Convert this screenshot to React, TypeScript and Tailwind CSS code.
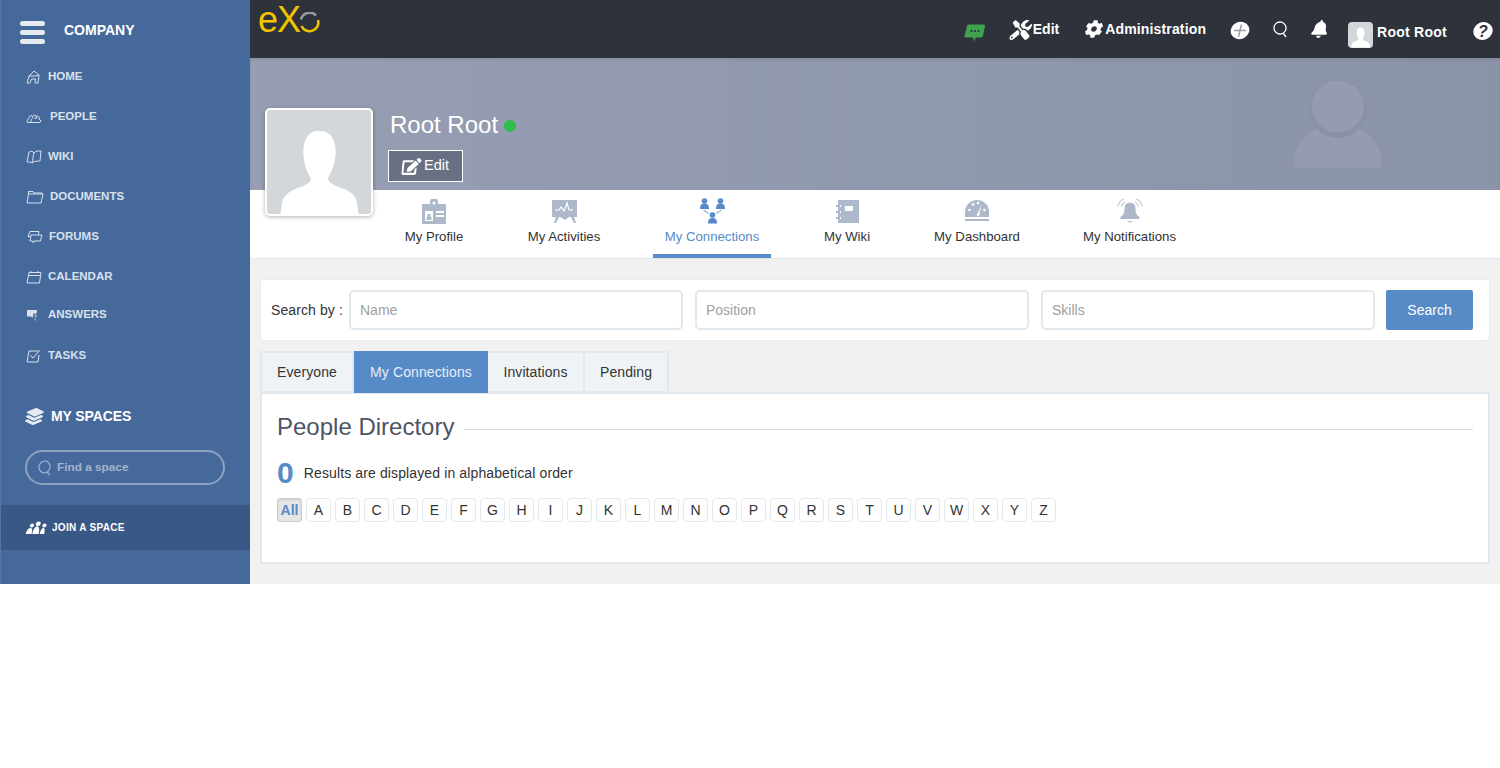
import { FaBell, FaCog, FaEdit, FaLayerGroup, FaTools } from 'react-icons/fa'
import type { ReactNode } from 'react'

const line = { fill: 'none', stroke: 'currentColor', strokeWidth: 1 }

function NavIcon({ children, w = 20 }: { children: ReactNode; w?: number }) {
  return (
    <svg width={w} height="14" viewBox={`0 0 ${w} 14`} {...line} strokeLinejoin="round">
      {children}
    </svg>
  )
}

const navItems = [
  {
    label: 'HOME',
    rowClass: 'h-10 gap-[8px]',
    icon: (
      <NavIcon w={14}>
        <path d="M1 13 3 6l5-5 5 4-1 8H9l.5-4h-4L4 13ZM3 6h7l3-1" />
      </NavIcon>
    ),
  },
  {
    label: 'PEOPLE',
    rowClass: 'h-10 gap-[8px]',
    icon: (
      <NavIcon w={16}>
        <path d="M1 12c0-2 1-3 2-3.500-.5-3 3-4 3.500-1.500M5 12c0-2 0-3 1.500-4-.5-3.500 4-4 4-.5 0 .5 0 1-.5 1.500M9 9c0-4 5-4 4 0l2 2-1 1.500H1" />
      </NavIcon>
    ),
  },
  {
    label: 'WIKI',
    rowClass: 'h-10 gap-[6px]',
    icon: (
      <NavIcon w={16}>
        <path d="M1 12 3 2c2-1 4-1 5 1-1 3-1 6-2 10-1-1-3-1-5-1ZM8 3c1-2 4-2 7-2l-1 10c-2 0-6 0-8 2" />
      </NavIcon>
    ),
  },
  {
    label: 'DOCUMENTS',
    rowClass: 'h-10 gap-[6px]',
    icon: (
      <NavIcon w={18}>
        <path d="M1 13 2.500 4H17l-2 9ZM2.500 4V1.500H7L8 3h8v1" />
      </NavIcon>
    ),
  },
  {
    label: 'FORUMS',
    rowClass: 'h-10 gap-[6px] pl-[1px]',
    icon: (
      <NavIcon w={16}>
        <path d="M3 1.500h9l-.5 3M3 1.500 1 6.500h2M4 5h11l-1.500 6H7l-.5 2-1-2H3Z" />
      </NavIcon>
    ),
  },
  {
    label: 'CALENDAR',
    rowClass: 'h-10 gap-[6px]',
    icon: (
      <NavIcon w={16}>
        <path d="M1 13 3 2.500h12L13.500 13ZM2.500 5.500h12M5 1v2M12 1v2" />
      </NavIcon>
    ),
  },
  {
    label: 'ANSWERS',
    rowClass: 'h-[35px] gap-[10px]',
    icon: (
      <svg width="12" height="12" viewBox="0 0 12 12" fill="currentColor">
        <path d="M1 1h10l-.5 3.500H7.500L6.500 9 5 7.500H1Z" />
        <path d="M8 6.500c1-1 2.500-.5 2.500.5S9 8 9 9" fill="none" stroke="currentColor" strokeWidth=".9" />
        <circle cx="9" cy="10.800" r=".7" />
      </svg>
    ),
  },
  {
    label: 'TASKS',
    rowClass: 'h-[47px] gap-[6px]',
    icon: (
      <NavIcon w={16}>
        <path d="M1 13 3 2h9M13 6l-1 7H1M4.500 6.500 7 9l7-8" />
      </NavIcon>
    ),
  },
]

const profileTabs = [
  {
    label: 'My Profile',
    widthClass: 'w-[82px]',
    icon: (
      <svg width="26" height="25" viewBox="0 0 26 25" fill="#aeb8cb">
        <path d="M1 5h8V3a4 4 0 0 1 8 0v2h8v20H1Z" />
        <circle cx="13" cy="4" r="1.500" fill="#fff" />
        <path d="M4 12h8v10H4Z" fill="#fff" />
        <path d="M6.500 15h3v3h1v3h-5v-3h1Z" />
        <path d="M15 12h8v2h-8ZM15 16h8v2h-8Z" fill="#fff" />
      </svg>
    ),
  },
  {
    label: 'My Activities',
    widthClass: 'w-[98px]',
    icon: (
      <svg width="26" height="24" viewBox="0 0 26 24" fill="#aeb8cb">
        <path d="M1 1h25v17H1Z" />
        <path d="M5 18h3l-3 6H3ZM20 18h3l2 6h-2ZM9 18h9l-4 3Z" />
        <path d="M4 11h4l2-3 3 4 3-8 2 7h4" fill="none" stroke="#fff" strokeWidth="1.200" />
      </svg>
    ),
  },
  {
    label: 'My Connections',
    widthClass: 'w-[118px]',
    active: true,
    icon: (
      <svg width="27" height="26" viewBox="0 0 27 26" fill="#578bc8">
        <circle cx="5.500" cy="3" r="2.800" />
        <path d="M1 11c0-4 1.500-5.500 4.500-5.500S10 7 10 11Z" />
        <circle cx="21.500" cy="3" r="2.800" />
        <path d="M17 11c0-4 1.500-5.500 4.500-5.500S26 7 26 11Z" />
        <circle cx="13.500" cy="17" r="2.800" />
        <path d="M9 25.500c0-4 1.500-5.500 4.500-5.500s4.500 1.500 4.500 5.500Z" />
        <path d="m4.500 12 5 3.500M22.500 12l-5 3.500" fill="none" stroke="#8fb0d8" strokeWidth="1.200" />
      </svg>
    ),
  },
  {
    label: 'My Wiki',
    widthClass: 'w-[72px]',
    icon: (
      <svg width="25" height="25" viewBox="0 0 25 25" fill="#aeb8cb">
        <path d="M3 1h20a1 1 0 0 1 1 1v22H3Z" />
        <path d="M1 6h4v2H1ZM1 12h4v2H1ZM1 18h4v2H1Z" />
        <path d="M10 7h8v5h-8Z" fill="#fff" />
        <path d="M5 6h1v2H5ZM5 12h1v2H5ZM5 18h1v2H5Z" fill="#fff" />
      </svg>
    ),
  },
  {
    label: 'My Dashboard',
    widthClass: 'w-[108px]',
    icon: (
      <svg width="26" height="24" viewBox="0 0 26 24" fill="#aeb8cb">
        <path d="M1 18v-5a12 12 0 0 1 24 0v5Z" />
        <path d="M1 20h24v2H1Z" />
        <circle cx="5.500" cy="11" r="1.300" fill="#fff" />
        <circle cx="9" cy="5.500" r="1.300" fill="#fff" />
        <circle cx="20.500" cy="11" r="1.300" fill="#fff" />
        <circle cx="14" cy="4" r="1.300" fill="#fff" />
        <path d="m17.500 5.500-2 9 .5 1-2 2-1.500-2 1.500-1.500Z" fill="#fff" />
      </svg>
    ),
  },
  {
    label: 'My Notifications',
    widthClass: 'w-[117px]',
    icon: (
      <svg width="26" height="26" viewBox="0 0 26 26" fill="#aeb8cb">
        <path d="M13 4.500a5.500 5.500 0 0 1 5.500 5.500c0 5 1 7 4 9v2H3.500v-2c3-2 4-4 4-9A5.500 5.500 0 0 1 13 4.500Z" />
        <path d="M10 23h6l-3 1.500Z" />
        <path d="M1 8.500C1.500 5 3.500 2 7 1M4.500 8.500C5 6.500 6 5 8 4M25 8.500C24.500 5 22.500 2 19 1M21.500 8.500C21 6.500 20 5 18 4" fill="none" stroke="#c5ccd9" strokeWidth="1.300" />
      </svg>
    ),
  },
]

const letters = 'ABCDEFGHIJKLMNOPQRSTUVWXYZ'.split('')

function Silhouette() {
  return (
    <svg viewBox="0 0 100 100" className="h-full w-full" fill="#fff">
      <path d="M35 40C35 27 41 20 50 20C60 20 66 27 66 40C66 50 62 60 59 65C58 69 62 71 66 73C78 77 86 80 87 92L88 100H13L14 92C15 80 24 77 35 73C40 71 43 69 42 65C38 60 35 50 35 40Z" />
    </svg>
  )
}

function Sidebar() {
  return (
    <aside className="flex w-[250px] shrink-0 flex-col border-l border-[#55769f] bg-[#46699b]">
      {/* Company */}
      <div className="flex h-[57px] items-center pl-[19px] pt-[3px]">
        <div className="mt-[5px] flex flex-col gap-1">
          <span className="h-[5px] w-[25px] rounded bg-[#e6ebf2]" />
          <span className="h-[5px] w-[25px] rounded bg-[#e6ebf2]" />
          <span className="h-[5px] w-[25px] rounded bg-[#e6ebf2]" />
        </div>
        <span className="ml-[19px] text-[14px] font-bold text-white">COMPANY</span>
      </div>

      <nav className="flex flex-col pl-[25px] text-[#d8e1ee]">
        {navItems.map((item) => (
          <a key={item.label} className={`flex items-center text-[11.5px] font-bold ${item.rowClass}`}>
            {item.icon}
            {item.label}
          </a>
        ))}
      </nav>

      {/* Spaces */}
      <div className="mt-[27px] flex h-5 items-center gap-[8px] pl-[25px] text-white">
        <FaLayerGroup size={17} className="-skew-x-12 text-[#e6ebf2]" />
        <span className="text-[14px] font-bold tracking-[-0.1px]">MY SPACES</span>
      </div>
      <div className="ml-6 mr-[25px] mt-[24px] flex h-[35px] items-center gap-[5px] rounded-full border-2 border-[#8da2c1] pl-[10px] text-[#a3b3cb]">
        <svg width="15" height="16" viewBox="0 0 15 16" fill="none" stroke="currentColor" strokeWidth="1.200">
          <ellipse cx="7.500" cy="7" rx="5.500" ry="6" transform="rotate(15 7.500 7)" />
          <path d="m10 12 3 3" />
        </svg>
        <span className="text-[11.800px] font-bold">Find a space</span>
      </div>
      <div className="mt-5 flex h-[45px] items-center gap-[5px] bg-[#3a5886] pl-[26px] text-white">
        <svg width="20" height="13" viewBox="0 0 20 13" fill="currentColor" className="-skew-x-12">
          <circle cx="4.500" cy="4.500" r="2" />
          <path d="M0 13c0-3 1.500-6 3.500-6s2.500 2 2.500 6Z" />
          <circle cx="10.500" cy="2.800" r="2.400" />
          <path d="M6.500 13c0-5 1.500-7.500 3.500-7.500s3 2.500 3 7.500Z" />
          <circle cx="17" cy="4.500" r="2" />
          <path d="M14 13c0-3 1-6 2.500-6s2 2.500 2 6Z" />
        </svg>
        <span className="mb-px text-[10px] font-bold tracking-[0.3px]">JOIN A SPACE</span>
      </div>
    </aside>
  )
}

function TopBar() {
  return (
    <header className="flex h-[58px] shrink-0 items-center justify-between bg-[#2d323b] pr-[7px] text-white">
      {/* Logo */}
      <div className="mb-[19px] ml-[8px] flex h-[39px] items-center text-[#f5c400]">
        <span className="text-[36px] leading-none tracking-[-1px]">eX</span>
        <svg width="21" height="21" viewBox="0 0 21 21" fill="none" strokeWidth="2.500" className="ml-[-1px] mt-[6px]">
          <path d="M2 7.500a8.800 8.800 0 0 1 15-4" stroke="#9b9b9b" />
          <path d="M19 8a8.800 8.800 0 0 1-16.500 6" stroke="#f5c400" />
        </svg>
      </div>

      <div className="flex items-center">
        <svg width="22" height="18" viewBox="0 0 22 18" className="mt-[7px]">
          <path d="M4 .5h16q1 0 1 1.500L19 12q-.5 1.500-2 1.500h-5l-2 4-1-4H2q-2 0-1.500-1.500L3 2q0-1.500 1-1.500Z" fill="#3fa34d" />
          <circle cx="7.500" cy="7" r="1.100" fill="#2d323b" />
          <circle cx="11" cy="7" r="1.100" fill="#2d323b" />
          <circle cx="14.500" cy="7" r="1.100" fill="#2d323b" />
        </svg>
        <FaTools size={20} className="ml-[25px] mb-[-2px] -skew-x-12" />
        <span className="ml-[2px] text-[14px] font-bold">Edit</span>
        <FaCog size={18} className="ml-[26px] -skew-x-12" />
        <span className="ml-[2px] text-[14px] font-bold tracking-[0.15px]">Administration</span>
        <svg width="20" height="19" viewBox="0 0 20 19" className="ml-[24px] mt-[2px]">
          <ellipse cx="10" cy="9.500" rx="9.500" ry="8.500" transform="rotate(-25 10 9.500)" fill="#fff" />
          <path d="M4 9.500h12M11.500 3.500 8.500 15.500" stroke="#9aa0a8" strokeWidth="1.500" />
        </svg>
        <svg width="16" height="17" viewBox="0 0 16 17" fill="none" stroke="#fff" strokeWidth="1.300" className="ml-[22px]">
          <ellipse cx="8" cy="7" rx="6" ry="6" transform="rotate(15 8 7)" />
          <path d="m11 12 3 4" />
        </svg>
        <FaBell size={18} className="ml-[23px] -skew-x-12" />
        <div className="ml-[19px] mt-[12px] h-[26px] w-[25px] rounded-sm bg-[#d3d7da]">
          <Silhouette />
        </div>
        <span className="ml-[4px] mt-[6px] text-[14px] font-bold tracking-[0.25px]">Root Root</span>
        <svg width="20" height="20" viewBox="0 0 20 20" className="ml-[26px] mt-[3px]">
          <ellipse cx="10" cy="10" rx="9.800" ry="8.800" transform="rotate(-25 10 10)" fill="#fff" />
          <text x="10" y="15.500" textAnchor="middle" fontSize="16" fontWeight="700" fontStyle="italic" fill="#2d323b">?</text>
        </svg>
      </div>
    </header>
  )
}

function Banner() {
  return (
    <section className="relative flex h-[132px] shrink-0 justify-between overflow-hidden bg-gradient-to-r from-[#979eb3] to-[#8a93a7] pl-[138px] pt-[50px] shadow-[inset_0_2px_3px_rgba(0,0,0,0.08)]">
      <div className="flex flex-col items-start">
        <div className="ml-[2px] flex items-center gap-[6px]">
          <span className="text-[24px] leading-[34px] text-white">Root Root</span>
          <span className="mt-[2px] h-3 w-3 rounded-full bg-[#2dbd4e]" />
        </div>
        <button className="mt-[8px] flex h-8 w-[75px] items-center gap-[3px] border border-white bg-[#6a7083] pl-[13px] text-[14.500px] text-white">
          <FaEdit size={19} className="-skew-x-6" />
          Edit
        </button>
      </div>
      <svg width="90" height="88" viewBox="0 0 90 88" className="mr-[117px] mt-[-28px] shrink-0" fill="#959cb0">
        <path d="M1 87.500C1 68 10 55 24 48L66 48C80 55 89 68 89 87.500Q89 88 88 88H2Q1 88 1 87.500Z" />
        <circle cx="45" cy="29" r="29" fill="#8992a6" />
        <circle cx="45" cy="26.500" r="26" />
      </svg>
    </section>
  )
}

function ProfileTabs() {
  return (
    <nav className="flex h-[69px] shrink-0 gap-10 border-b border-[#e1e8ee] bg-white pl-[143px] text-[13.200px]">
      {profileTabs.map((tab) => (
        <a
          key={tab.label}
          className={`flex h-[68px] flex-col items-center whitespace-nowrap border-b-4 ${tab.widthClass} ${
            tab.active ? 'border-[#578bc8] text-[#578bc8]' : 'border-transparent text-[#333]'
          }`}
        >
          <span className="flex h-[37px] items-center pt-[5px]">{tab.icon}</span>
          <span className="mt-[1px] leading-[18px]">{tab.label}</span>
        </a>
      ))}
    </nav>
  )
}

function SearchBar() {
  return (
    <form className="flex h-[60px] items-center rounded-[3px] bg-white pl-[10px] text-[14px] shadow-[0_0_2px_rgba(0,0,0,0.08)]">
      <span className="mr-[6px] w-[72px] whitespace-nowrap tracking-[0.1px] text-[#333]">Search by :</span>
      <div className="grid w-[1026px] grid-cols-3 gap-3">
        {['Name', 'Position', 'Skills'].map((name) => (
          <input
            key={name}
            readOnly
            placeholder={name}
            className="h-10 min-w-0 rounded-[5px] border-2 border-[#e1e8ee] bg-white px-[9px] text-[14px] placeholder:text-[#a0a0a0]"
          />
        ))}
      </div>
      <button type="button" className="ml-[11px] h-10 w-[87px] rounded-[2px] bg-[#578bc8] text-white">
        Search
      </button>
    </form>
  )
}

function DirectoryTabs() {
  return (
    <div className="relative z-10 flex h-[42px] text-[14px] tracking-[0.1px] text-[#333]">
      <span className="flex w-[94px] items-center justify-center border-2 border-[#e1e8ee] bg-[#f0f3f6]">Everyone</span>
      <span className="flex w-[134px] items-center justify-center bg-[#578bc8] text-[#e8eef7]">My Connections</span>
      <span className="flex w-[97px] items-center justify-center border-2 border-l-0 border-[#e1e8ee] bg-[#f0f3f6]">Invitations</span>
      <span className="flex w-[84px] items-center justify-center border-2 border-l-0 border-[#e1e8ee] bg-[#f0f3f6]">Pending</span>
    </div>
  )
}

function Directory() {
  return (
    <div className="mt-[-1px] h-[172px] border-2 border-[#e1e8ee] bg-white px-[15px] pt-[19px]">
      <div className="flex items-center gap-[10px]">
        <h2 className="text-[24px] leading-7 text-[#4d5466]">People Directory</h2>
        <div className="mt-[4px] h-px flex-1 bg-[#d8dbe0]" />
      </div>
      <div className="mt-[16px] flex items-center gap-[10px] text-[14px] tracking-[0.12px] text-[#333]">
        <span className="text-[30px] leading-[32px] font-bold text-[#578bc8]">0</span>
        Results are displayed in alphabetical order
      </div>
      <div className="mt-[9px] flex gap-1 text-[14px] text-[#333]">
        <span className="flex h-6 w-[25px] items-center justify-center rounded-[3px] border border-[#c9ced4] bg-[#e6e6e6] font-bold text-[#578bc8] shadow-[inset_0_1px_2px_rgba(0,0,0,0.12)]">
          All
        </span>
        {letters.map((letter) => (
          <span key={letter} className="flex h-6 w-[25px] items-center justify-center rounded-[4px] border border-[#e1e8ee] bg-white">
            {letter}
          </span>
        ))}
      </div>
    </div>
  )
}

export default function App() {
  return (
    <div className="flex h-[584px] w-full font-['Liberation_Sans',Arial,sans-serif]">
      <Sidebar />
      <main className="relative flex min-w-0 flex-1 flex-col bg-[#f1f1f1]">
        <TopBar />
        <Banner />
        <ProfileTabs />

        {/* Avatar overlaps banner and tabs */}
        <div className="absolute left-[15px] top-[108px] h-[108px] w-[108px] overflow-hidden rounded-[5px] border-2 border-white bg-[#d3d7da] shadow-[0_1px_4px_rgba(0,0,0,0.3)]">
          <Silhouette />
        </div>

        <div className="flex flex-col px-[11px] pt-[21px]">
          <SearchBar />
          <div className="-mx-px mt-[11px]">
            <DirectoryTabs />
            <Directory />
          </div>
        </div>
      </main>
    </div>
  )
}
